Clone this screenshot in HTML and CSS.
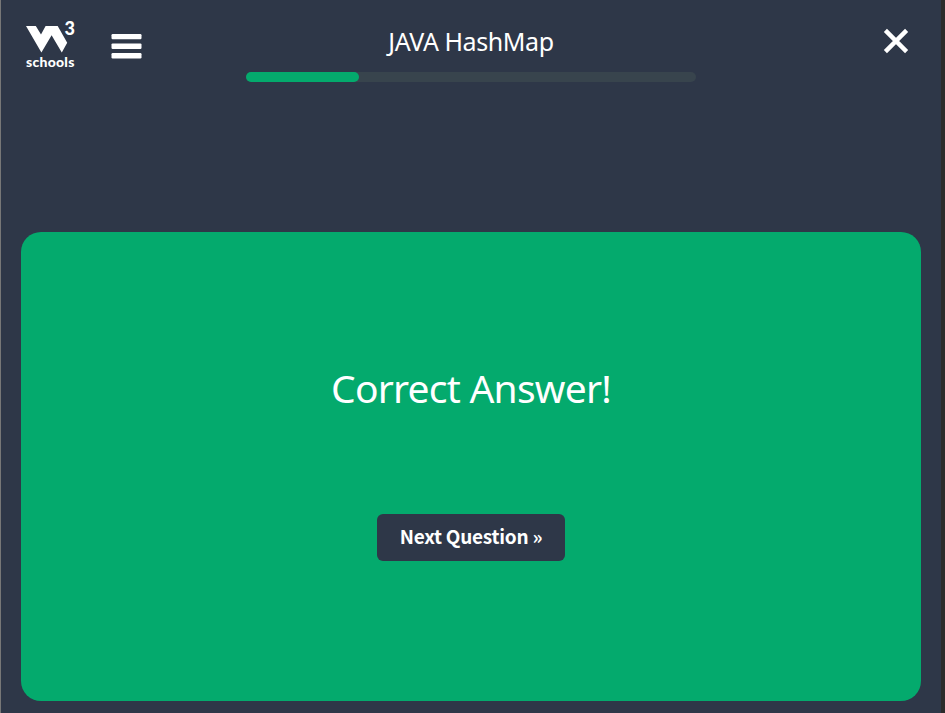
FILE: index.html
```html
<!DOCTYPE html>
<html lang="en">
<head>
<meta charset="utf-8">
<title>JAVA HashMap</title>
<link rel="stylesheet" href="styles.css">
</head>
<body>
<main class="quiz">
  <header class="topbar">
    <a class="logo" aria-label="W3Schools">
      <span class="logo-top">
        <svg class="mark" viewBox="0 0 42 28" aria-hidden="true"><path d="M0 1H9.8L15 9.6L19.6 1H31.7L41.2 17.7L35.8 27.5L25.6 10.2L15.4 27.5Z"/></svg>
        <span class="three">3</span>
      </span>
      <span class="schools">schools</span>
    </a>
    <svg class="menu" viewBox="0 0 31 26" aria-label="Menu"><rect x=".5" width="30" height="5.3" rx="1.2"/><rect x=".5" y="9.4" width="30" height="5.6" rx="1.2"/><rect x=".5" y="19" width="30" height="5.5" rx="1.2"/></svg>
    <div class="progress">
      <h1>JAVA HashMap</h1>
      <div class="track"><div class="fill"></div></div>
    </div>
    <svg class="close" viewBox="0 0 26 26" aria-label="Close"><path d="M2.4 2.4L23.6 23.6M23.6 2.4L2.4 23.6"/></svg>
  </header>
  <section class="result">
    <h2>Correct Answer!</h2>
    <button class="next"><span>Next Question »</span></button>
  </section>
</main>
</body>
</html>
```
FILE: styles.css
```css
* { box-sizing: border-box; }
body {
  margin: 0;
  height: 713px;
  overflow: hidden;
  background: #2b2b2b;
  color: #fff;
  font-family: "Noto Sans", "Open Sans", sans-serif;
}
.quiz {
  width: 941px;
  height: 713px;
  padding: 0 20px;
  background: #2e3748;
  border-left: 1px solid #777;
}
.topbar {
  display: grid;
  grid-template-columns: 90px 135px 450px 1fr;
  height: 232px;
  align-items: start;
}
.logo {
  display: block;
  margin: 20px 0 0 5px;
}
.logo-top { display: flex; height: 33px; }
.mark { width: 42px; height: 28px; margin-top: 5px; fill: #fff; flex: none; }
.three {
  margin-left: -3.5px;
  font: 900 18px/17px Lato, sans-serif;
}
.schools {
  display: block;
  font: 900 14px/18px Lato, sans-serif;
  letter-spacing: 0.25px;
}
.menu {
  display: block;
  width: 31px;
  height: 26px;
  margin-top: 34px;
  fill: #fff;
}
.progress { text-align: center; }
h1 {
  margin: 23px 0 13px;
  font-size: 25px;
  line-height: 36px;
  font-weight: 400;
  letter-spacing: -0.42px;
}
.track { height: 10px; border-radius: 5px; background: #38444d; }
.fill { width: 25%; height: 10px; border-radius: 5px; background: #04aa6d; }
.close {
  justify-self: end;
  width: 26px;
  height: 26px;
  margin: 28px 12px 0 0;
  fill: none;
  stroke: #fff;
  stroke-width: 4.4;
}
.result {
  display: flex;
  flex-direction: column;
  align-items: center;
  width: 900px;
  height: 469px;
  border-radius: 20px;
  background: #04aa6d;
}
h2 {
  margin: 128px 0 98px;
  font-size: 39px;
  line-height: 56px;
  font-weight: 400;
  letter-spacing: -0.78px;
}
.next {
  width: 188px;
  height: 47px;
  padding: 0 0 3px;
  border: 0;
  border-radius: 6px;
  background: #2e3748;
  color: #fff;
  font: 700 19px/44px "Noto Sans CJK SC", sans-serif;
  letter-spacing: -0.25px;
}
```
